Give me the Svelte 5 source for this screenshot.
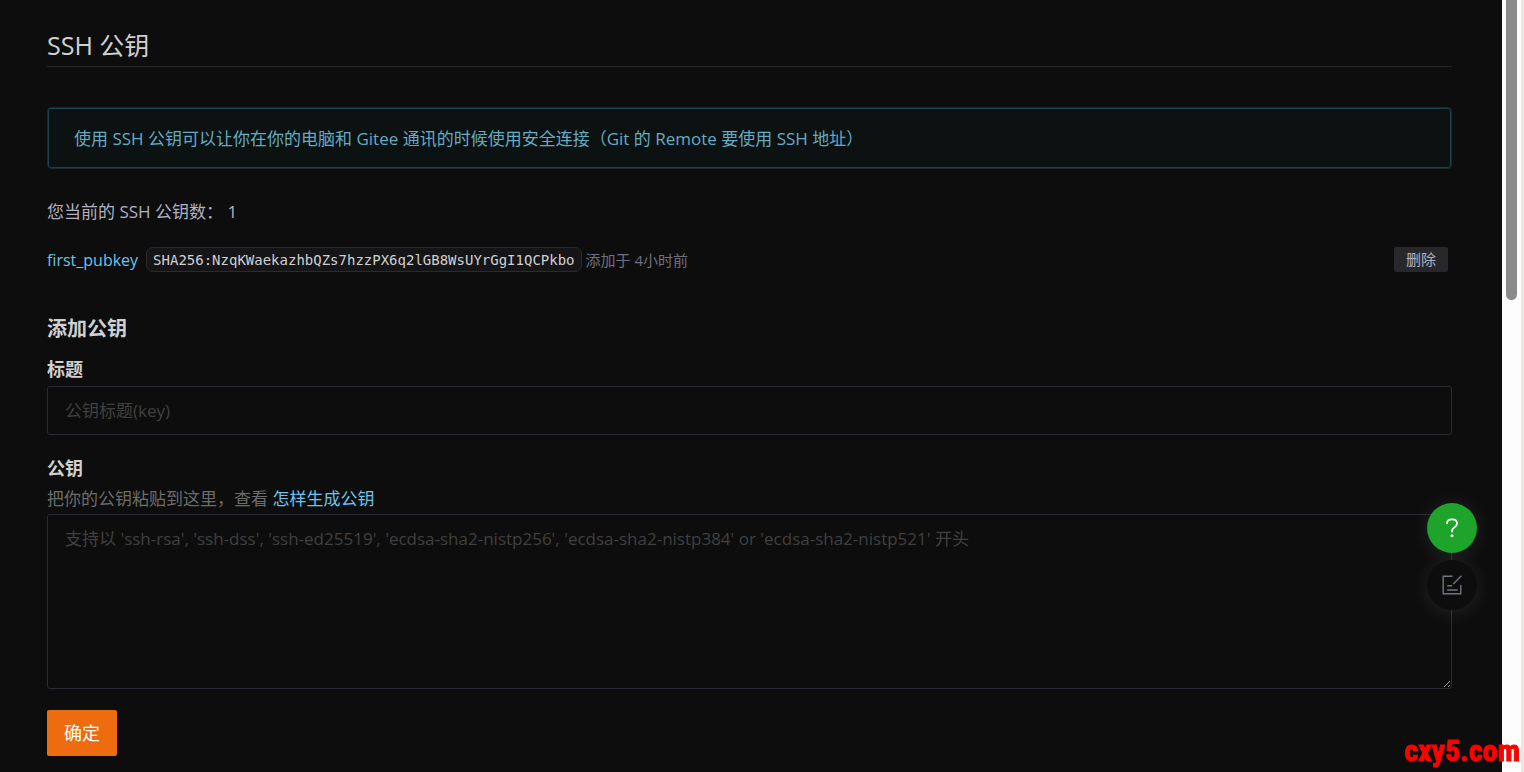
<script lang="ts">
    type PublicKey = {
        name: string;
        fingerprint: string;
        addedAt: string;
    };

    let keys: PublicKey[] = $state([
        {
            name: 'first_pubkey',
            fingerprint: 'SHA256:NzqKWaekazhbQZs7hzzPX6q2lGB8WsUYrGgI1QCPkbo',
            addedAt: '4小时前'
        }
    ]);
    let title = $state('');
    let content = $state('');

    function removeKey(index: number): void {
        keys.splice(index, 1);
    }

    function handleSubmit(event: SubmitEvent): void {
        event.preventDefault();
        if (!title || !content) return;
        keys.push({ name: title, fingerprint: content, addedAt: '刚刚' });
        title = '';
        content = '';
    }
</script>

<div class="page">
    <main class="content">
        <h1>SSH 公钥</h1>

        <div class="message">使用 SSH 公钥可以让你在你的电脑和 Gitee 通讯的时候使用安全连接（Git 的 Remote 要使用 SSH 地址）</div>

        <p class="key-count">您当前的 SSH 公钥数： {keys.length}</p>

        <ul class="key-list">
            {#each keys as key, index}
                <li class="key-item">
                    <a class="key-name" href="#key">{key.name}</a>
                    <code>{key.fingerprint}</code>
                    <span class="key-date">添加于 {key.addedAt}</span>
                    <button type="button" class="delete-button" onclick={() => removeKey(index)}>删除</button>
                </li>
            {/each}
        </ul>

        <form onsubmit={handleSubmit}>
            <h2>添加公钥</h2>
            <div class="field">
                <label for="key-title">标题</label>
                <input id="key-title" type="text" placeholder="公钥标题(key)" bind:value={title} />
            </div>
            <div class="field">
                <label for="key-content">公钥</label>
                <p class="hint">把你的公钥粘贴到这里，查看 <a href="#help">怎样生成公钥</a></p>
                <textarea
                    id="key-content"
                    placeholder="支持以 'ssh-rsa', 'ssh-dss', 'ssh-ed25519', 'ecdsa-sha2-nistp256', 'ecdsa-sha2-nistp384' or 'ecdsa-sha2-nistp521' 开头"
                    bind:value={content}
                ></textarea>
            </div>
            <button type="submit" class="submit-button">确定</button>
        </form>
    </main>

    <div class="scrollbar">
        <div class="scrollbar-thumb"></div>
    </div>

    <div class="side-toolbar">
        <button type="button" class="round-button help" aria-label="帮助">
            <svg width="14" height="20" viewBox="0 0 14 20" fill="none" stroke="#fff" stroke-width="1.8">
                <path d="M2 6V5.4C2 2.8 4 1.3 7 1.3s5 1.6 5 4.1c0 1.8-1 2.9-2.6 4C7.7 10.7 7 11.3 7 13v1.2" />
                <circle cx="7" cy="17.8" r="1.5" fill="#fff" stroke="none" />
            </svg>
        </button>
        <button type="button" class="round-button feedback" aria-label="反馈">
            <svg width="20" height="20" viewBox="0 0 20 20" fill="none" stroke="#707482" stroke-width="1.4">
                <path d="M10.5 1.2H1.2v17.6h17.6V10" />
                <path d="M19.3.8l-8 8.200M5.200 10.800h5M5.200 15h10.500" />
            </svg>
        </button>
    </div>

    <div class="watermark">cxy5.com</div>
</div>

<style>
    :global(body) {
        margin: 0;
        background-color: #0d0d0d;
    }

    .page {
        --text: #d0d0d0;
        --link: #6cc4ec;
        --border: #2a2b33;
        display: flex;
        min-height: 100vh;
        color: var(--text);
        font-family: "Open Sans", "Noto Sans CJK SC", sans-serif;
        font-size: 17px;
        line-height: 24px;
    }

    .content {
        flex: 1;
        min-width: 0;
        padding: 26px 50px 16px 47px;
    }

    h1 {
        margin: 0 0 40px;
        padding-bottom: 2px;
        border-bottom: 1px solid #262628;
        font-size: 25px;
        font-weight: 400;
        line-height: 38px;
    }

    .message {
        padding: 19px 26px 17px;
        border: 1px solid #162a2f;
        border-radius: 4px;
        box-shadow: inset 0 0 0 1px #1b424b;
        background-color: #0c1112;
        color: #64acc4;
    }

    .key-count {
        margin: 29px 0 21px;
        color: #b0b2c4;
        line-height: 28px;
    }

    .key-list {
        margin: 0;
        padding: 0;
        list-style: none;
    }

    .key-item {
        display: flex;
        align-items: center;
        gap: 4px;
        padding-right: 4px;
    }

    .key-name {
        margin-right: 4px;
        font-size: 16px;
    }

    a {
        color: var(--link);
        text-decoration: none;
    }

    code {
        padding: 1px 6px 0;
        border: 1px solid #2a2b30;
        border-radius: 7px;
        background-color: #151517;
        font-family: "DejaVu Sans Mono", monospace;
        font-size: 14px;
        line-height: 22px;
    }

    .key-date {
        color: #6e7080;
        font-size: 15px;
        line-height: 22px;
    }

    button {
        border: 0;
        padding: 0;
        font-family: inherit;
        cursor: pointer;
    }

    .delete-button {
        margin-left: auto;
        padding: 0 12px 1px;
        border-radius: 2px;
        background-color: #28282a;
        color: #b0b2c4;
        font-size: 15px;
        line-height: 24px;
    }

    h2 {
        margin: 43px 0 14px;
        font-size: 20px;
        font-weight: 700;
        line-height: 28px;
    }

    .field {
        display: flex;
        flex-direction: column;
        margin-bottom: 21px;
    }

    label {
        margin-bottom: 5px;
        font-size: 18px;
        font-weight: 700;
    }

    .hint {
        margin: 2px 0 3px;
        color: #6c6c6c;
    }

    input,
    textarea {
        box-sizing: border-box;
        width: 100%;
        padding: 12px 17px;
        border: 1px solid var(--border);
        border-radius: 3px;
        outline: none;
        background-color: #0d0d0d;
        color: var(--text);
        font: inherit;
    }

    input {
        height: 49px;
    }

    textarea {
        display: block;
        height: 175px;
        resize: vertical;
    }

    input::placeholder,
    textarea::placeholder {
        color: #404040;
    }

    input:focus,
    textarea:focus {
        border-color: #50525e;
    }

    .submit-button {
        padding: 0 17px;
        border-radius: 2px;
        background-color: #ed6c0f;
        color: #fff;
        font-size: 18px;
        line-height: 46px;
    }

    .scrollbar {
        flex: none;
        width: 11px;
        padding: 0 4px;
        border-right: 3px solid #f0e4e4;
        background-color: #fdfdfd;
    }

    .scrollbar-thumb {
        height: 300px;
        border-radius: 0 0 6px 6px;
        background-color: #8b8b8b;
    }

    .side-toolbar {
        position: fixed;
        right: 47px;
        bottom: 162px;
        display: flex;
        flex-direction: column;
        gap: 7px;
    }

    .round-button {
        display: flex;
        align-items: center;
        justify-content: center;
        width: 50px;
        height: 50px;
        border-radius: 50%;
        box-shadow: 0 2px 20px rgba(255, 255, 255, 0.1);
    }

    .help {
        background-color: #1ea32b;
    }

    .feedback {
        background-color: #0d0d0d;
    }

    .watermark {
        position: fixed;
        right: 4px;
        bottom: 3px;
        color: #f00;
        font-family: "Liberation Sans Narrow", "Roboto Condensed", "Open Sans Condensed", "DejaVu Sans Condensed", sans-serif;
        font-size: 30px;
        font-weight: 700;
        line-height: 36px;
        -webkit-text-stroke: 1px #f00;
    }
</style>
